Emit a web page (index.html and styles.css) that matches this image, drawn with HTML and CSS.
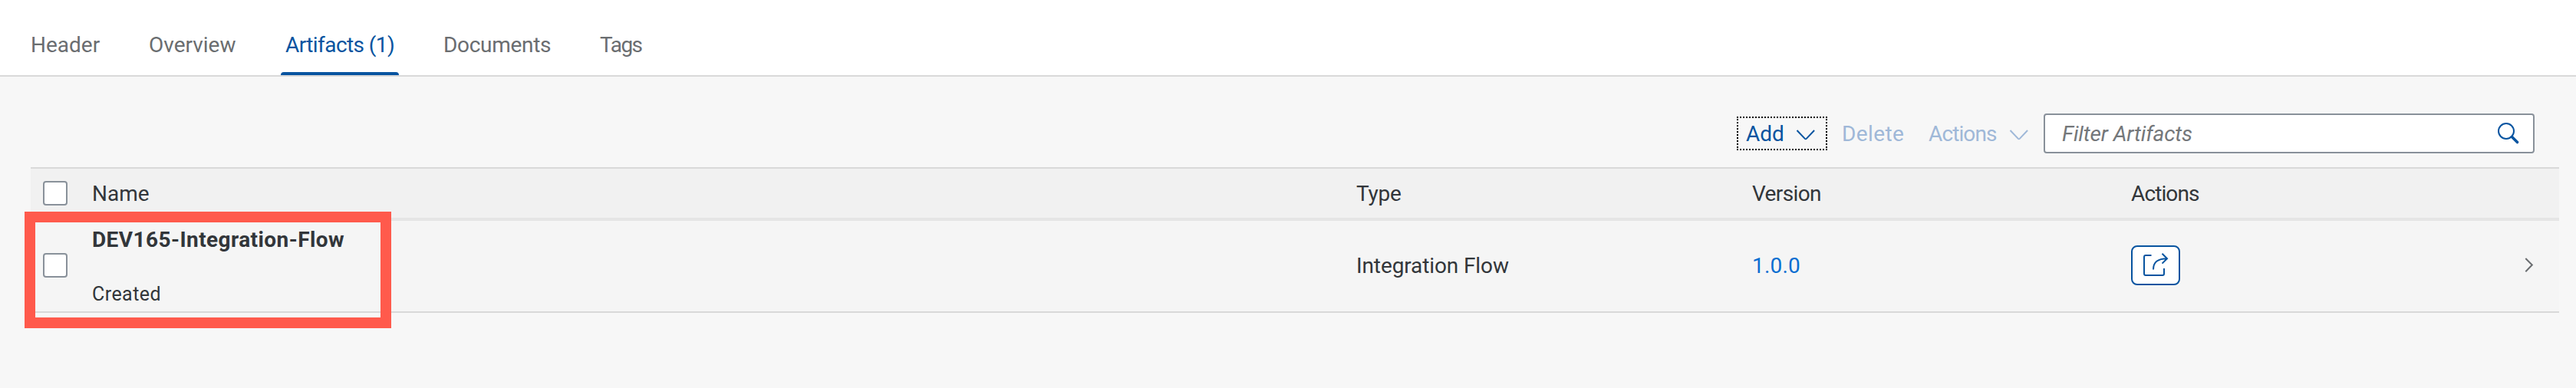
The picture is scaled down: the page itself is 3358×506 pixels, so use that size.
FILE: index.html
```html
<!DOCTYPE html>
<html lang="en">
<head>
<meta charset="utf-8">
<title>Artifacts</title>
<link rel="stylesheet" href="styles.css">
</head>
<body>
<nav class="tabs">
  <a class="tab header">Header</a>
  <a class="tab overview">Overview</a>
  <a class="tab active">Artifacts (1)</a>
  <a class="tab documents">Documents</a>
  <a class="tab tags">Tags</a>
</nav>
<main class="content">
  <div class="toolbar">
    <button class="btn add"><span class="label">Add</span>
      <svg class="caret" viewBox="0 0 26 16"><path d="M1.5 2 L11.6 12.6 Q12.8 13.8 14 12.6 L24.1 2"/></svg>
    </button>
    <button class="btn delete disabled"><span class="label">Delete</span></button>
    <button class="btn menu disabled"><span class="label">Actions</span>
      <svg class="caret" viewBox="0 0 26 16"><path d="M1.5 2 L11.6 12.6 Q12.8 13.8 14 12.6 L24.1 2"/></svg>
    </button>
    <div class="search">
      <span class="label placeholder">Filter Artifacts</span>
      <svg class="lens" viewBox="0 0 30 30"><circle cx="12" cy="12" r="10"/><path class="handle" d="M19.5 19.5 L26.5 26.5"/></svg>
    </div>
  </div>
  <section class="table">
    <div class="row head">
      <span class="check"></span>
      <span class="label">Name</span>
      <span class="label type-label">Type</span>
      <span class="label version-label">Version</span>
      <span class="label actions-label">Actions</span>
    </div>
    <div class="row item">
      <span class="check"></span>
      <div class="artifact">
        <strong class="title">DEV165-Integration-Flow</strong>
        <span class="status">Created</span>
      </div>
      <span class="label type">Integration Flow</span>
      <a class="label version">1.0.0</a>
      <button class="share">
        <svg class="share-icon" viewBox="0 0 36 36"><path d="M12.5 9 H5 Q3 9 3 11 V33 Q3 35 5 35 H27 Q29 35 29 33 V26 M15 27.5 C15 18 20.5 13.2 33 13.2 M26.5 6.8 L33 13.2 L26.5 19.6"/></svg>
      </button>
      <svg class="next" viewBox="0 0 12 20"><path d="M1.3 1 L9.8 9.5 L1.3 18.2"/></svg>
    </div>
    <div class="highlight"></div>
  </section>
</main>
</body>
</html>
```

FILE: styles.css
```css
* { box-sizing: border-box; }

body {
  margin: 0;
  min-height: 506px;
  background: #f7f7f7;
  color: #32363a;
  font: 28px/36px Roboto, "Noto Sans", sans-serif;
}

button {
  margin: 0;
  padding: 0;
  border: 0;
  background: none;
  color: inherit;
  font: inherit;
  letter-spacing: inherit;
}

svg {
  display: block;
  flex: none;
  fill: none;
  stroke: currentColor;
  stroke-width: 2;
}

.label { padding-top: 2px; }

/* Tab strip */
.tabs {
  display: flex;
  height: 100px;
  padding-left: 40px;
  background: #fff;
  border-bottom: 2px solid #d9d9d9;
}

.tab {
  height: 98px;
  padding-top: 41px;
  color: #6a6d70;
  white-space: nowrap;
}

.header { width: 154px; }
.overview { width: 172px; }
.documents { width: 204px; letter-spacing: -0.31px; }
.tags { letter-spacing: -1.5px; }

.active {
  position: relative;
  width: 154px;
  margin-right: 58px;
  padding-left: 6px;
  color: #0854a0;
  letter-spacing: -0.58px;
}

.active::after {
  content: "";
  position: absolute;
  left: 0;
  bottom: 0;
  width: 154px;
  height: 4px;
  border-radius: 4px 4px 0 0;
  background: #0854a0;
}

/* Toolbar */
.toolbar {
  display: flex;
  justify-content: flex-end;
  align-items: center;
  height: 118px;
  padding: 30px 54px 0 0;
}

.btn {
  display: flex;
  align-items: center;
  height: 44px;
  color: #0854a0;
  white-space: nowrap;
}

.disabled { color: #9fb8d8; }

.add {
  width: 118px;
  margin-right: 19px;
  padding-left: 10px;
  border: 2px dotted #000;
}

.caret { width: 26px; height: 16px; margin-top: 4px; }
.add .caret { margin-left: 15px; }
.delete { width: 113px; letter-spacing: 0.39px; }
.menu { width: 150px; letter-spacing: -0.89px; }
.menu .caret { margin-left: 16px; }

.search {
  display: flex;
  align-items: center;
  justify-content: space-between;
  width: 640px;
  height: 52px;
  padding: 0 17px 0 22px;
  border: 2px solid #89919a;
  border-radius: 4px;
  background: #fff;
}

.placeholder {
  color: #74777a;
  font-style: italic;
  letter-spacing: -0.13px;
}

.lens { width: 30px; height: 30px; color: #0854a0; }
.handle { stroke-width: 3.6; stroke-linecap: round; }

/* Artifact table */
.table {
  position: relative;
  width: 3296px;
  margin-left: 40px;
  border-top: 2px solid #d9d9d9;
}

.row {
  display: grid;
  grid-template-columns: 64px 1648px 516px 494px 513px 1fr;
  align-items: center;
  padding-left: 16px;
}

.head {
  height: 68px;
  background: #f1f1f1;
  border-bottom: 4px solid #e5e5e5;
}

.item {
  height: 120px;
  padding-bottom: 2px;
  background: #f5f5f5;
  border-bottom: 2px solid #d9d9d9;
}

.check {
  width: 32px;
  height: 32px;
  border: 2px solid #89919a;
  border-radius: 4px;
  background: #fff;
}

.type-label { letter-spacing: -0.23px; }
.version-label { letter-spacing: -0.63px; }
.actions-label { letter-spacing: -0.89px; }

.artifact {
  display: flex;
  flex-direction: column;
  gap: 35px;
  padding-top: 5px;
}

.title { letter-spacing: 0.42px; }
.status { font-size: 25px; letter-spacing: 0.45px; }
.type { letter-spacing: -0.11px; }
.version { color: #0a6ed1; letter-spacing: 0.2px; }

.share {
  display: flex;
  align-items: center;
  justify-content: center;
  width: 64px;
  height: 52px;
  border: 2px solid #0854a0;
  border-radius: 8px;
  background: #fff;
  color: #0854a0;
}

.share-icon { width: 36px; height: 36px; margin-bottom: 8px; }
.next { width: 12px; height: 20px; color: #6a6d70; }

/* Frame over the selected artifact */
.highlight {
  position: absolute;
  left: -8px;
  top: 56px;
  width: 478px;
  height: 152px;
  border: 14px solid #ff5a4c;
}
```
